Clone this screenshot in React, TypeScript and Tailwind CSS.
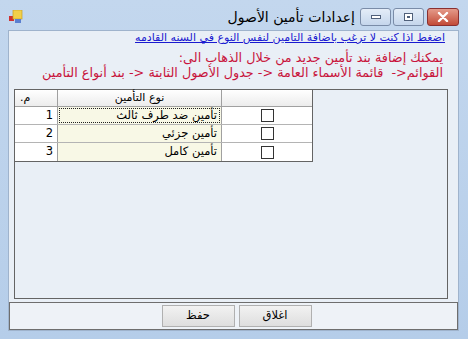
import React from "react";

const AR = { fontFamily: '"DejaVu Sans", "Noto Sans", sans-serif' };

function Checkbox() {
  return <div className="w-[13px] h-[13px] border border-[#333] bg-white" />;
}

export default function App() {
  const rows = [
    { n: "1", name: "تأمين ضد طرف ثالث", focus: true },
    { n: "2", name: "تأمين جزئي", focus: false },
    { n: "3", name: "تأمين كامل", focus: false },
  ];
  return (
    <div
      className="w-[468px] h-[339px] flex flex-col bg-gradient-to-b from-[#c3d7ee] to-[#b5cde9] overflow-hidden"
      style={AR}
    >
      {/* Title bar */}
      <div className="h-[30px] flex items-start relative shrink-0">
        <svg className="absolute left-[9px] top-[10px]" width="14" height="14" viewBox="0 0 14 14">
          <rect x="0" y="6" width="5" height="5" fill="#d03030" />
          <rect x="4" y="0" width="9" height="9" fill="#f2d04a" stroke="#c9a020" strokeWidth="0.7" />
          <rect x="6" y="9" width="6" height="4" fill="#5a7fd0" />
        </svg>
        <div className="absolute right-[113px] top-[8px] text-[14px] leading-[18px] text-black" dir="rtl">
          إعدادات تأمين الأصول
        </div>
        <div className="absolute left-[360px] top-[8px] w-[31px] h-[18px] rounded-[3px] border border-[#7a8ca8] bg-gradient-to-b from-[#e4edf8] to-[#c5d6ec] flex items-center justify-center">
          <div className="w-[10px] h-[4px] border border-[#50607a] bg-white" />
        </div>
        <div className="absolute left-[393px] top-[8px] w-[31px] h-[18px] rounded-[3px] border border-[#7a8ca8] bg-gradient-to-b from-[#e4edf8] to-[#c5d6ec] flex items-center justify-center">
          <div className="w-[9px] h-[8px] border border-[#50607a] bg-white flex items-center justify-center">
            <div className="w-[3px] h-[2px] bg-[#50607a]" />
          </div>
        </div>
        <div className="absolute left-[427px] top-[8px] w-[32px] h-[18px] rounded-[3px] border border-[#8a3030] bg-gradient-to-b from-[#e49a8a] to-[#c24a38] flex items-center justify-center">
          <svg width="12" height="10" viewBox="0 0 12 10">
            <path d="M2 1 L10 9 M10 1 L2 9" stroke="#fff" strokeWidth="2.4" strokeLinecap="round" />
          </svg>
        </div>
      </div>

      {/* Client */}
      <div className="flex-1 ml-[8px] mr-[9px] mb-[8px] bg-[#e9eff6] flex flex-col border border-[#9fb3cc]" dir="rtl">
        <div className="h-[13px] pr-[13px] pt-[1px] text-[11px] leading-[12px] text-[#1a1ad0] underline whitespace-nowrap">
          اضغط اذا كنت لا ترغب باضافة التامين لنفس النوع في السنه القادمه
        </div>
        <div className="pr-[15px] pt-[6px] text-[12.8px] leading-[15px] text-[#c8143c] whitespace-nowrap">
          <div>يمكنك إضافة بند تأمين جديد من خلال الذهاب الى:</div>
          <div>القوائم&lt;-&nbsp; قائمة الأسماء العامة &lt;- جدول الأصول الثابتة &lt;- بند أنواع التأمين</div>
        </div>
        {/* Grid */}
        <div className="mt-[9px] mr-[10px] ml-[5px] h-[210px] border border-[#646464] bg-[#e9eff6]" dir="ltr">
          <div className="w-[298px] border-r border-b border-[#646464]">
            <div className="flex h-[17px] bg-gradient-to-b from-[#ffffff] to-[#ececec] text-[11px] leading-[16px] text-black border-b border-[#a0a0a0]">
              <div className="w-[43px] border-r border-[#a0a0a0] pl-[5px]" dir="rtl" style={{ textAlign: "left" }}>
                م.
              </div>
              <div className="w-[164px] border-r border-[#a0a0a0] text-center" dir="rtl">
                نوع التأمين
              </div>
              <div className="flex-1" />
            </div>
            {rows.map((r, i) => (
              <div key={r.n} className={"flex h-[18px] text-[11.5px] leading-[17px] text-black " + (i < 2 ? "border-b border-[#b4b4b4]" : "")}>
                <div className="w-[43px] border-r border-[#a0a0a0] bg-white text-right pr-[4px]">{r.n}</div>
                <div className="w-[164px] border-r border-[#a0a0a0] bg-[#f8f8e6] relative" dir="rtl">
                  {r.focus && <div className="absolute inset-[1px] border border-dotted border-[#222]" />}
                  <div className="pr-[4px] text-right">{r.name}</div>
                </div>
                <div className="flex-1 bg-white flex items-center justify-center">
                  <Checkbox />
                </div>
              </div>
            ))}
          </div>
        </div>
        <div className="flex-1" />
        {/* Bottom panel */}
        <div className="h-[28px] border border-[#6e6e6e] bg-[#eef2f7] flex items-center justify-center gap-[4px] pl-[6px]" dir="ltr">
          <button className="w-[73px] h-[22px] border border-[#b0b0b0] bg-gradient-to-b from-[#f2f2f2] to-[#dedede] text-[11.5px] text-black" dir="rtl">
            حفظ
          </button>
          <button className="w-[73px] h-[22px] border border-[#b0b0b0] bg-gradient-to-b from-[#f2f2f2] to-[#dedede] text-[11.5px] text-black" dir="rtl">
            اغلاق
          </button>
        </div>
      </div>
    </div>
  );
}
